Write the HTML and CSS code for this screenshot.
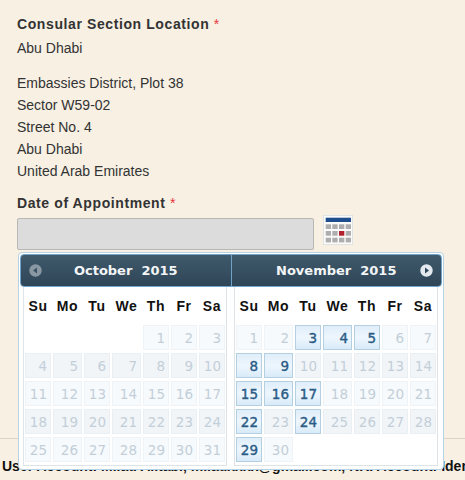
FILE: index.html
```html
<!DOCTYPE html>
<html lang="en">
<head>
  <meta charset="UTF-8">
  <title>Consular Appointment</title>
  <link rel="stylesheet" href="styles.css">
</head>
<body>
  <main class="form">
    <h3 class="label">Consular Section Location <span class="req">*</span></h3>
    <p class="value">Abu Dhabi</p>
    <p class="address">
      Embassies District, Plot 38<br>
      Sector W59-02<br>
      Street No. 4<br>
      Abu Dhabi<br>
      United Arab Emirates
    </p>
    <h3 class="label date-label">Date of Appointment <span class="req">*</span></h3>
    <div class="date-row">
      <input class="date-input" type="text" disabled>
      <svg class="cal-icon" width="30" height="30" viewBox="0 0 30 30">
        <rect x="0.5" y="0.5" width="29" height="29" fill="#fbfbf9" stroke="#dfe3e6"/>
        <rect x="2.7" y="2.7" width="25.3" height="4.3" fill="#1f4e8f"/>
        <g fill="#aeaeb0">
          <rect x="2.7" y="9.3" width="5.3" height="4.7"/><rect x="9.3" y="9.3" width="5.3" height="4.7"/><rect x="16" y="9.3" width="5.3" height="4.7"/><rect x="22.7" y="9.3" width="5.3" height="4.7"/>
          <rect x="2.7" y="16" width="5.3" height="4.7"/><rect x="9.3" y="16" width="5.3" height="4.7"/><rect x="22.7" y="16" width="5.3" height="4.7"/>
          <rect x="2.7" y="22.7" width="5.3" height="4.7"/><rect x="9.3" y="22.7" width="5.3" height="4.7"/><rect x="16" y="22.7" width="5.3" height="4.7"/><rect x="22.7" y="22.7" width="5.3" height="4.7"/>
        </g>
        <rect x="16" y="16" width="5.3" height="4.7" fill="#b3202e"/>
      </svg>
    </div>

    <div class="picker">
      <div class="picker-head">
        <div class="head-half">
          <svg class="nav" width="13" height="13" viewBox="0 0 13 13"><circle cx="6.5" cy="6.5" r="6.2" fill="#8a98a3"/><path d="M8 3.5v6L4 6.5z" fill="#3b5364"/></svg>
          <span class="month">October&nbsp; 2015</span>
        </div>
        <div class="head-half">
          <span class="month">November&nbsp; 2015</span>
          <svg class="nav" width="13" height="13" viewBox="0 0 13 13"><circle cx="6.5" cy="6.5" r="6.2" fill="#e3e9ee"/><path d="M5 3.5v6l4-3z" fill="#2f4759"/></svg>
        </div>
      </div>
      <div class="months">
        <div class="pane">
          <table class="cal">
            <tr><th>Su</th><th>Mo</th><th>Tu</th><th>We</th><th>Th</th><th>Fr</th><th>Sa</th></tr>
            <tr><td class="blank"></td><td class="blank"></td><td class="blank"></td><td class="blank"></td><td>1</td><td>2</td><td>3</td></tr>
            <tr class="alt"><td>4</td><td>5</td><td>6</td><td>7</td><td>8</td><td>9</td><td>10</td></tr>
            <tr><td>11</td><td>12</td><td>13</td><td>14</td><td>15</td><td>16</td><td>17</td></tr>
            <tr class="alt"><td>18</td><td>19</td><td>20</td><td>21</td><td>22</td><td>23</td><td>24</td></tr>
            <tr><td>25</td><td>26</td><td>27</td><td>28</td><td>29</td><td>30</td><td>31</td></tr>
          </table>
        </div>
        <div class="pane">
          <table class="cal">
            <tr><th>Su</th><th>Mo</th><th>Tu</th><th>We</th><th>Th</th><th>Fr</th><th>Sa</th></tr>
            <tr><td>1</td><td>2</td><td class="on">3</td><td class="on">4</td><td class="on">5</td><td>6</td><td>7</td></tr>
            <tr class="alt"><td class="on">8</td><td class="on">9</td><td>10</td><td>11</td><td>12</td><td>13</td><td>14</td></tr>
            <tr><td class="on">15</td><td class="on">16</td><td class="on">17</td><td>18</td><td>19</td><td>20</td><td>21</td></tr>
            <tr class="alt"><td class="on">22</td><td>23</td><td class="on">24</td><td>25</td><td>26</td><td>27</td><td>28</td></tr>
            <tr><td class="on">29</td><td>30</td><td class="blank"></td><td class="blank"></td><td class="blank"></td><td class="blank"></td><td class="blank"></td></tr>
          </table>
        </div>
      </div>
    </div>
  </main>

  <footer class="foot">
    <p class="foot-text">User Account: Milad Alitabi, miladxxxx@gmail.com, NRI Account: Identity</p>
  </footer>
</body>
</html>
```

FILE: styles.css
```css
html, body {
  margin: 0;
  height: 480px;
  overflow: hidden;
}
body {
  position: relative;
  background-color: #f7f0e3;
  color: #333;
  font-family: "Liberation Sans", Arial, sans-serif;
  font-size: 14px;
}
.form {
  padding: 16px 17px 0;
  height: 421px;
  box-sizing: border-box;
}
.label {
  margin: 0;
  font-size: 14px;
  line-height: 16px;
  letter-spacing: 0.6px;
  color: #333;
}
.req {
  color: #e8343f;
  font-weight: normal;
  letter-spacing: 0;
}
.value {
  margin: 8px 0 0;
  line-height: 16px;
}
.address {
  margin: 16px 0 0;
  line-height: 22px;
}
.date-label {
  margin-top: 13px;
}
.date-row {
  display: flex;
  align-items: flex-start;
  gap: 9px;
  margin-top: 4px;
}
.date-input {
  width: 297px;
  height: 32px;
  margin-top: 3px;
  box-sizing: border-box;
  padding: 0;
  border: 1px solid #b8b8b4;
  border-radius: 2px;
  background-color: #dcdcdc;
}
.cal-icon {
  display: block;
}

/* popup sits over the form and the footer */
.picker {
  position: absolute;
  z-index: 2;
  left: 18px;
  top: 252px;
  width: 426px;
  height: 218px;
  box-sizing: border-box;
  padding: 1px;
  background-color: #fff;
  border: 1px solid #b5d2e6;
  border-radius: 4px;
}
.picker-head {
  display: flex;
  height: 33px;
  box-sizing: border-box;
  border: 1px solid #6fa3c9;
  border-radius: 4px;
  background: linear-gradient(#3f5a6c, #2e4557);
  color: #f3f5f7;
  font-family: "DejaVu Sans", sans-serif;
  font-size: 13px;
  font-weight: bold;
}
.head-half {
  flex: 1;
  display: grid;
  grid-template-columns: 13px 1fr 13px;
  align-items: center;
  padding: 0 8px;
}
.head-half:first-child {
  border-right: 1px solid #6fa3c9;
}
.month {
  grid-column: 2;
  grid-row: 1;
  text-align: center;
}
.head-half:last-child .nav {
  grid-column: 3;
  grid-row: 1;
}
.months {
  display: flex;
  gap: 7px;
  padding: 0 3px;
}
.pane {
  width: 204px;
  box-sizing: border-box;
  border: 1px solid #dde3e6;
  border-top: 0;
}
.cal {
  width: 204px;
  margin: 0 -1px;
  table-layout: fixed;
  border-collapse: separate;
  border-spacing: 2px 3px;
}
.cal th {
  width: 26px;
  height: 32px;
  box-sizing: border-box;
  padding: 0;
  font-size: 14px;
  letter-spacing: 0.6px;
  color: #111;
  text-align: center;
}
.cal th:nth-child(2),
.cal th:nth-child(4) {
  width: 29px;
}
.cal td {
  height: 25px;
  box-sizing: border-box;
  padding: 0 3px 0 0;
  border: 1px solid #edf3f7;
  background-color: #f6fafd;
  color: #c3cfd8;
  font-family: "DejaVu Sans", sans-serif;
  font-size: 13.5px;
  text-align: right;
}
.cal .alt td {
  background-color: #f1f5f8;
  border-color: #e9eff3;
}
.cal td.blank {
  border-color: transparent;
  background: none;
}
.cal td.on,
.cal .alt td.on {
  border-color: #b3cfe0;
  background: linear-gradient(#dfeefa, #eef6fd 50%, #d8ebf9);
  color: #2b5c86;
  -webkit-text-stroke: 0.4px #2b5c86;
}

.foot {
  border-top: 1px solid #ddd6c8;
  margin-top: 17px;
  padding-top: 19px;
}
.foot-text {
  margin: 0 0 0 2px;
  overflow: hidden;
  white-space: nowrap;
  font-size: 14px;
  font-weight: bold;
  line-height: 16px;
  color: #111;
}
```
